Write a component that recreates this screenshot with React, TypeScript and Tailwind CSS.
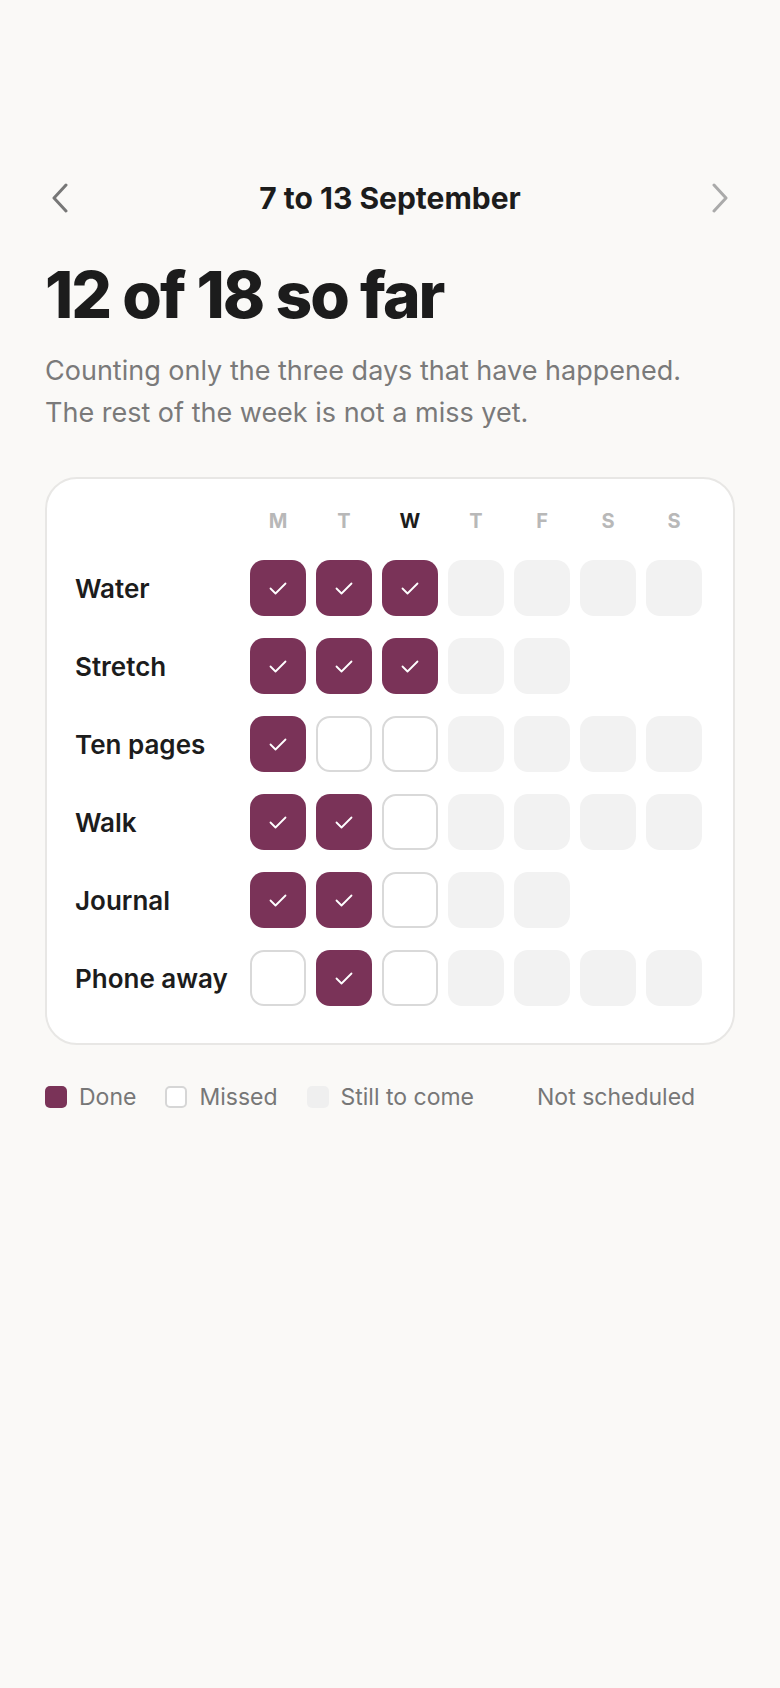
import React from "react";

type Cell = "done" | "missed" | "future" | "none";

const DAYS = ["M", "T", "W", "T", "F", "S", "S"];
const TODAY = 2;

const HABITS: { name: string; week: Cell[] }[] = [
  { name: "Water", week: ["done", "done", "done", "future", "future", "future", "future"] },
  { name: "Stretch", week: ["done", "done", "done", "future", "future", "none", "none"] },
  { name: "Ten pages", week: ["done", "missed", "missed", "future", "future", "future", "future"] },
  { name: "Walk", week: ["done", "done", "missed", "future", "future", "future", "future"] },
  { name: "Journal", week: ["done", "done", "missed", "future", "future", "none", "none"] },
  { name: "Phone away", week: ["missed", "done", "missed", "future", "future", "future", "future"] },
];

function Check() {
  return (
    <svg width="18" height="13" viewBox="0 0 18 13" fill="none">
      <polyline points="1.5,6.5 6.5,11.5 16.5,1.5" stroke="white" strokeWidth="1.8" strokeLinecap="round" strokeLinejoin="round" />
    </svg>
  );
}

function DayCell({ state }: { state: Cell }) {
  if (state === "done") {
    return (
      <div className="w-[56px] h-[56px] rounded-[14px] bg-[#7a3358] flex items-center justify-center">
        <Check />
      </div>
    );
  }
  if (state === "missed") {
    return <div className="w-[56px] h-[56px] rounded-[14px] bg-white border-2 border-[#d9d9d9]" />;
  }
  if (state === "future") {
    return <div className="w-[56px] h-[56px] rounded-[14px] bg-[#f2f2f2]" />;
  }
  return <div className="w-[56px] h-[56px]" />;
}

function Chevron({ dir, color }: { dir: "left" | "right"; color: string }) {
  return (
    <svg width="18" height="30" viewBox="0 0 18 30" fill="none">
      <polyline
        points={dir === "left" ? "15,2 3,15 15,28" : "3,2 15,15 3,28"}
        stroke={color}
        strokeWidth="3"
        strokeLinecap="round"
        strokeLinejoin="round"
      />
    </svg>
  );
}

export default function App() {
  return (
    <div
      className="min-h-[1688px] bg-[#faf9f7] text-[#1c1c1c] px-[45px] pt-[180px]"
      style={{ fontFamily: "Inter, 'Noto Sans', sans-serif" }}
    >
      {/* Week switcher */}
      <div className="flex items-center justify-between h-[36px]">
        <button className="w-[36px] h-[36px] flex items-center justify-start pl-[6px]">
          <Chevron dir="left" color="#777777" />
        </button>
        <h2 className="text-[30px] leading-[36px] font-bold">7 to 13 September</h2>
        <button className="w-[36px] h-[36px] flex items-center justify-end pr-[6px]">
          <Chevron dir="right" color="#aaaaaa" />
        </button>
      </div>

      <h1 className="mt-[47px] text-[64px] leading-[64px] font-extrabold tracking-[-0.03em]">12 of 18 so far</h1>
      <p className="mt-[23px] text-[27px] leading-[42px] text-[#7a7a7a]">
        Counting only the three days that have happened.
        <br />
        The rest of the week is not a miss yet.
      </p>

      {/* Week grid */}
      <div className="mt-[43px] bg-white border-2 border-[#e8e7e5] rounded-[32px] pl-[28px] pr-[31px] pt-[30px] pb-[37px]">
        <div className="flex items-center">
          <div className="w-[175px] shrink-0" />
          <div className="flex gap-[10px]">
            {DAYS.map((d, i) => (
              <div
                key={i}
                className={`w-[56px] text-center text-[20px] leading-[24px] font-bold ${
                  i === TODAY ? "text-[#1c1c1c]" : "text-[#b8b8b8]"
                }`}
              >
                {d}
              </div>
            ))}
          </div>
        </div>

        <div className="mt-[27px] flex flex-col gap-[22px]">
          {HABITS.map((h) => (
            <div key={h.name} className="flex items-center">
              <div className="w-[175px] shrink-0 text-[26px] font-semibold">{h.name}</div>
              <div className="flex gap-[10px]">
                {h.week.map((c, i) => (
                  <DayCell key={i} state={c} />
                ))}
              </div>
            </div>
          ))}
        </div>
      </div>

      {/* Legend */}
      <div className="mt-[37px] flex items-center h-[30px] text-[23px] text-[#777777]">
        <div className="flex items-center gap-[12px] mr-[29px]">
          <span className="w-[22px] h-[22px] rounded-[5px] bg-[#7a3358]" />
          <span>Done</span>
        </div>
        <div className="flex items-center gap-[12px] mr-[29px]">
          <span className="w-[22px] h-[22px] rounded-[5px] bg-white border-2 border-[#d6d6d6]" />
          <span>Missed</span>
        </div>
        <div className="flex items-center gap-[12px] mr-[29px]">
          <span className="w-[22px] h-[22px] rounded-[5px] bg-[#efefef]" />
          <span>Still to come</span>
        </div>
        <div className="flex items-center gap-[12px]">
          <span className="w-[22px] h-[22px] rounded-[5px]" />
          <span>Not scheduled</span>
        </div>
      </div>
    </div>
  );
}
